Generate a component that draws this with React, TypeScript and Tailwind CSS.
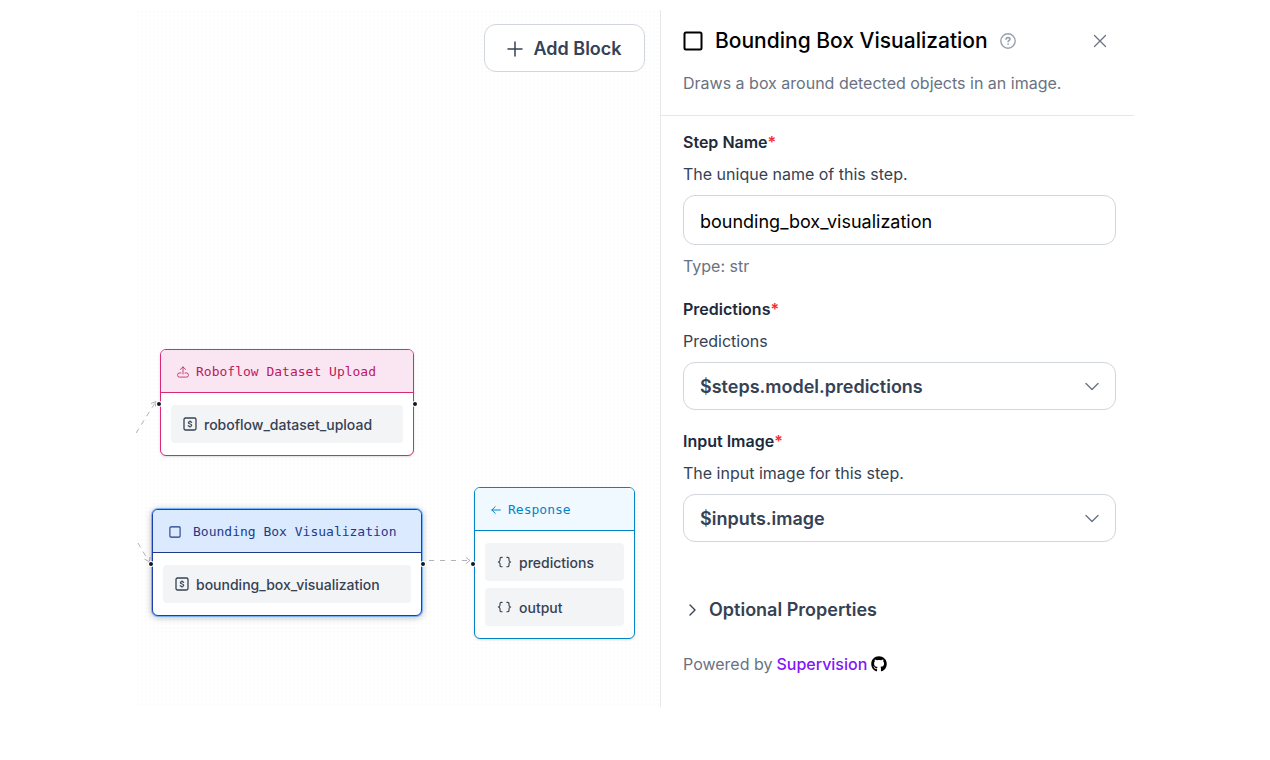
import type { ReactNode } from "react";
import { FaGithub } from "react-icons/fa";

const UploadIcon = () => (
    <svg className="size-3 shrink-0" viewBox="0 0 12 12" fill="none" stroke="currentColor" strokeWidth="0.8" strokeLinecap="round" strokeLinejoin="round">
        <path d="M6 8V1M3.4 3.4 6 .9l2.6 2.5" />
        <path d="M4 7H2.3A1.7 1.7 0 0 0 .6 8.7v.7a1.7 1.7 0 0 0 1.7 1.7h7.4a1.7 1.7 0 0 0 1.7-1.7v-.7A1.7 1.7 0 0 0 9.7 7H8" />
    </svg>
);

const SquareIcon = ({ className, strokeWidth }: { className: string; strokeWidth: number }) => (
    <svg className={className} viewBox="0 0 20 20" fill="none" stroke="currentColor" strokeWidth={strokeWidth}>
        <rect x="1.5" y="1.5" width="17" height="17" rx="1.5" />
    </svg>
);

const ArrowLeftIcon = () => (
    <svg className="h-3 w-[10px] shrink-0" viewBox="0 0 10 12" fill="none" stroke="currentColor" strokeLinecap="round" strokeLinejoin="round">
        <path d="M9.3 6H.9M4.2 2.7.8 6l3.4 3.3" />
    </svg>
);

const DollarIcon = () => (
    <svg className="size-[14px] shrink-0" viewBox="0 0 14 14" fill="none" stroke="currentColor" strokeWidth="1.3" strokeLinecap="round">
        <rect x="1" y="1" width="12" height="12" rx="1.5" />
        <path d="M8.7 5.3C8.3 4.8 7.7 4.6 7 4.6c-1 0-1.7.4-1.7 1.2 0 1.6 3.5.8 3.5 2.4 0 .8-.8 1.2-1.8 1.2-.8 0-1.5-.2-1.9-.8M7 3.7v.9M7 9.4v.9" strokeWidth="1.1" />
    </svg>
);

const BracesIcon = () => (
    <svg className="h-3 w-[15px] shrink-0" viewBox="0 0 16 12" fill="none" stroke="currentColor" strokeWidth="1.2" strokeLinecap="round" strokeLinejoin="round">
        <path d="M5.5 1h-.8c-1 0-1.5.6-1.5 1.4v1.8c0 .9-.6 1.4-1.7 1.8 1.1.4 1.7.9 1.7 1.8v1.8c0 .8.5 1.4 1.5 1.4h.8" />
        <path d="M10.5 1h.8c1 0 1.5.6 1.5 1.4v1.8c0 .9.6 1.4 1.7 1.8-1.1.4-1.7.9-1.7 1.8v1.8c0 .8-.5 1.4-1.5 1.4h-.8" />
    </svg>
);

const Handle = ({ className }: { className: string }) => (
    <span className={`absolute size-1 rounded-full bg-gray-900 ring-1 ring-white ${className}`} />
);

type NodeProps = {
    title: string;
    icon: ReactNode;
    className: string;
    headerClass: string;
    children: ReactNode;
};

const Node = ({ title, icon, className, headerClass, children }: NodeProps) => (
    <div className={`absolute rounded-md border bg-white ${className}`}>
        <div className={`flex h-[43px] items-center rounded-t-[5px] border-b px-4 pt-px font-['DejaVu_Sans_Mono',monospace] text-[13px] ${headerClass}`}>
            {icon}
            <span className="whitespace-nowrap">{title}</span>
        </div>
        <div className="flex flex-col gap-[7px] px-[10px] py-3">{children}</div>
    </div>
);

const NodeRow = ({ icon, label }: { icon: ReactNode; label: string }) => (
    <div className="flex h-[38px] items-center gap-[7px] rounded bg-gray-100 px-3 text-[14px] font-medium text-gray-700">
        {icon}
        <span>{label}</span>
    </div>
);

const Edges = () => (
    <svg className="absolute top-0 left-0 h-[697px] w-[524px]" viewBox="0 0 524 697" fill="none" stroke="#b1b1b7">
        <path d="M0 423 19 393" strokeDasharray="5 5" />
        <path d="M15 393.5l5-2-.5 5" />
        <path d="M2 533 12 550" strokeDasharray="5 5" />
        <path d="M8.5 549l5 3 .5-5" />
        <path d="M293 550.5H333" strokeDasharray="5 6" />
        <path d="M330 547.5l4 3-4 3" />
    </svg>
);

const Canvas = () => (
    <section className="relative min-w-[524px] flex-1 bg-[radial-gradient(circle,#fbfbfc_1px,transparent_1px)] bg-size-[4px_4px]">
        <button className="absolute top-[14px] right-[15px] flex h-12 w-[161px] items-center justify-center gap-[10px] rounded-xl border border-gray-300 bg-white pt-[2px] text-lg font-semibold text-gray-700">
            <svg className="size-4" viewBox="0 0 16 16" fill="none" stroke="currentColor" strokeWidth="1.5" strokeLinecap="round">
                <path d="M8 1v14M1 8h14" />
            </svg>
            Add Block
        </button>

        <Edges />

        <Node
            title="Roboflow Dataset Upload"
            icon={<UploadIcon />}
            className="top-[339px] left-6 w-[254px] border-[#db2777] shadow-sm"
            headerClass="gap-[7px] border-[#db2777] bg-[#fae6f2] text-[#be185d]"
        >
            <NodeRow icon={<DollarIcon />} label="roboflow_dataset_upload" />
            <Handle className="top-[52px] -left-1" />
            <Handle className="top-[52px] -right-1" />
        </Node>

        <Node
            title="Bounding Box Visualization"
            icon={<SquareIcon className="size-3 shrink-0" strokeWidth={1.8} />}
            className="top-[499px] left-4 w-[270px] border-[#1e40af] shadow-[0_1px_6px_1px_#00000040] ring-1 ring-blue-400/70"
            headerClass="gap-3 border-[#1e3a8a] bg-blue-100 text-[#1e3a8a]"
        >
            <NodeRow icon={<DollarIcon />} label="bounding_box_visualization" />
            <Handle className="top-[52px] -left-1" />
            <Handle className="top-[52px] -right-1" />
        </Node>

        <Node
            title="Response"
            icon={<ArrowLeftIcon />}
            className="top-[477px] left-[338px] w-[161px] border-[#0284c7] shadow-sm"
            headerClass="gap-[7px] border-[#0284c7] bg-sky-50 text-[#0284c7]"
        >
            <NodeRow icon={<BracesIcon />} label="predictions" />
            <NodeRow icon={<BracesIcon />} label="output" />
            <Handle className="top-[74px] -left-1" />
        </Node>
    </section>
);

type FieldProps = {
    id: string;
    label: string;
    description: string;
    children: ReactNode;
};

const Field = ({ id, label, description, children }: FieldProps) => (
    <div className="flex flex-col gap-[9px]">
        <div className="flex flex-col gap-2">
            <label htmlFor={id} className="font-semibold text-gray-800">
                {label}
                <span className="text-red-500">*</span>
            </label>
            <p className="text-gray-700">{description}</p>
        </div>
        {children}
    </div>
);

const Select = ({ id, value }: { id: string; value: string }) => (
    <div className="relative">
        <select
            id={id}
            defaultValue={value}
            className="h-12 w-full appearance-none rounded-xl border border-gray-300 bg-white px-4 pt-[2px] text-lg font-semibold text-gray-700"
        >
            <option value={value}>{value}</option>
        </select>
        <svg className="pointer-events-none absolute top-4 right-4 size-4 text-gray-500" viewBox="0 0 16 16" fill="none" stroke="currentColor" strokeWidth="1.4" strokeLinecap="round" strokeLinejoin="round">
            <path d="m2 5.5 6 6 6-6" />
        </svg>
    </div>
);

const SidePanel = () => (
    <aside className="w-[474px] shrink-0 border-l border-gray-200 text-base">
        <header className="border-b border-gray-200 pt-4 pr-[26px] pb-5 pl-[22px]">
            <div className="flex h-[30px] items-center">
                <SquareIcon className="size-5 shrink-0" strokeWidth={2} />
                <h1 className="ml-3 text-[21px] font-medium text-black">Bounding Box Visualization</h1>
                <button aria-label="Help" className="ml-3 text-gray-400">
                    <svg className="size-4" viewBox="0 0 16 16" fill="none" stroke="currentColor" strokeWidth="1.4" strokeLinecap="round">
                        <circle cx="8" cy="8" r="7.2" />
                        <path d="M6 6.2c.1-1 .9-1.6 2-1.6s2 .7 2 1.6c0 1.3-1.9 1.3-1.9 2.5M8.1 11v.2" strokeWidth="1.6" />
                    </svg>
                </button>
                <button aria-label="Close" className="ml-auto text-gray-500">
                    <svg className="size-4" viewBox="0 0 16 16" fill="none" stroke="currentColor" strokeWidth="1.3" strokeLinecap="round">
                        <path d="m2.5 2.5 11 11M13.5 2.5l-11 11" />
                    </svg>
                </button>
            </div>
            <p className="mt-[15px] text-gray-500">Draws a box around detected objects in an image.</p>
        </header>

        <form className="flex flex-col gap-[19px] pt-[14px] pr-[18px] pl-[22px]">
            <Field id="step-name" label="Step Name" description="The unique name of this step.">
                <input
                    id="step-name"
                    type="text"
                    defaultValue="bounding_box_visualization"
                    className="h-[50px] w-full rounded-xl border border-gray-300 px-4 pt-[2px] text-lg text-black"
                />
                <p className="text-gray-500">Type: str</p>
            </Field>
            <Field id="predictions" label="Predictions" description="Predictions">
                <Select id="predictions" value="$steps.model.predictions" />
            </Field>
            <Field id="input-image" label="Input Image" description="The input image for this step.">
                <Select id="input-image" value="$inputs.image" />
            </Field>
        </form>

        <div className="flex flex-col items-start gap-7 pt-[54px] pl-[22px]">
            <button type="button" className="flex items-center gap-3 pl-1 text-lg font-semibold text-gray-700">
                <svg className="h-3 w-[10px]" viewBox="0 0 10 12" fill="none" stroke="currentColor" strokeWidth="1.4" strokeLinecap="round" strokeLinejoin="round">
                    <path d="m3 1 5 5-5 5" />
                </svg>
                Optional Properties
            </button>
            <p className="flex items-center gap-1 text-gray-500">
                Powered by
                <a href="#supervision" className="flex items-center gap-1 font-medium text-[#8315f9]">
                    Supervision
                    <FaGithub className="size-4 text-black" />
                </a>
            </p>
        </div>
    </aside>
);

const App = () => {
    return (
        <main className="mx-auto mt-[10px] flex min-h-[697px] max-w-[998px] bg-white font-['Inter',sans-serif]">
            <Canvas />
            <SidePanel />
        </main>
    );
};

export default App;
